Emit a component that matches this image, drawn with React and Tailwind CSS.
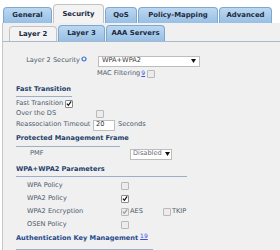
import React from 'react';

const topTabs = [
  { label: 'General', w: 'w-[49px]' },
  { label: 'Security', w: 'w-[51px]', active: true },
  { label: 'QoS', w: 'w-[32px]' },
  { label: 'Policy-Mapping', w: 'w-[80px]' },
  { label: 'Advanced', w: 'w-[53px]' },
];

const subTabs = [
  { label: 'Layer 2', w: 'w-[48px]', active: true },
  { label: 'Layer 3', w: 'w-[47px]' },
  { label: 'AAA Servers', w: 'w-[59px]' },
];

function Tab({ label, w, active, tall }) {
  if (active) {
    return (
      <div
        className={`${w} ${tall} flex items-center justify-center rounded-t-[4px] border border-b-0 border-[#c2c2c2] bg-[#f3f3f3] font-bold text-[#1c2a40]`}
      >
        {label}
      </div>
    );
  }
  return (
    <div
      className={`${w} h-[16px] flex items-center justify-center rounded-t-[4px] border border-b-0 border-[#7fa8d0] bg-gradient-to-b from-[#bcd8f1] to-[#97bfe5] font-bold text-[#1c2a40]`}
    >
      {label}
    </div>
  );
}

function Checkbox({ checked, disabled }) {
  return (
    <span
      className={`inline-flex shrink-0 w-[8px] h-[8px] items-center justify-center rounded-[1px] border ${
        checked && !disabled ? 'border-[#8a8a8a] bg-white' : 'border-[#b9b9b9] bg-[#ececec]'
      }`}
    >
      {checked && (
        <svg width="7" height="7" viewBox="0 0 7 7">
          <path
            d="M1 3.6 L2.8 5.6 L6 1"
            fill="none"
            stroke={disabled ? '#9a9a9a' : '#111'}
            strokeWidth="1.4"
          />
        </svg>
      )}
    </span>
  );
}

function Header({ children, line, mt, gap }) {
  return (
    <div className={mt}>
      <div className="h-[10px] leading-[10px] pl-[13px] font-bold text-[#23406b]">{children}</div>
      <div className={`${gap} ml-[13px] ${line} h-px bg-[#9bb0c6]`} />
    </div>
  );
}

function Caret() {
  return (
    <svg width="5" height="4" viewBox="0 0 5 4" className="shrink-0">
      <path d="M0 0 H5 L2.5 4 Z" fill="#111" />
    </svg>
  );
}

export default function App() {
  return (
    <div className="w-[280px] h-[250px] overflow-hidden whitespace-nowrap bg-white font-['DejaVu_Sans',sans-serif] text-[6.6px] text-[#4a5a6c]">
      {/* top tabs */}
      <div className="flex items-end gap-px h-[23px] pl-[3px] text-[6.9px]">
        {topTabs.map((t) => (
          <Tab key={t.label} {...t} tall="h-[19px]" />
        ))}
      </div>

      <div className="ml-[2px] h-[227px] border-l border-[#c6c6c6] bg-[#f0f0f0]">
        {/* sub tabs */}
        <div className="flex items-end gap-px h-[19px] pl-[6px] border-b border-[#a7b9cb] text-[6.9px]">
          {subTabs.map((t) => (
            <Tab key={t.label} {...t} tall="h-[15px]" />
          ))}
        </div>

        {/* Layer 2 security */}
        <div className="mt-[13px] h-[12px] flex items-center">
          <span className="w-[77px] text-right">Layer 2 Security</span>
          <svg width="6" height="6" viewBox="0 0 6 6" className="ml-[1px] -mt-[5px]">
            <circle cx="3" cy="3" r="2" fill="none" stroke="#3b6fd8" strokeWidth="1.2" />
          </svg>
          <div className="ml-[11px] w-[102px] h-[11px] flex items-center justify-between px-[3px] bg-white border border-[#bdbdbd] text-[#3a3a3a]">
            <span>WPA+WPA2</span>
            <Caret />
          </div>
        </div>

        {/* MAC filtering */}
        <div className="h-[14px] flex items-center pl-[94px]">
          <span>MAC Filtering</span>
          <span className="ml-[1px] -mt-[4px] text-[6px] text-[#3b4fe0] underline">9</span>
          <span className="ml-[2px] flex">
            <Checkbox />
          </span>
        </div>

        <Header mt="mt-[3px]" line="w-[56px]" gap="mt-[2px]">Fast Transition</Header>

        <div className="mt-[1px] h-[11px] flex items-center pl-[13px]">
          <span>Fast Transition</span>
          <span className="ml-[2px] flex">
            <Checkbox checked />
          </span>
        </div>
        <div className="h-[10px] flex items-center pl-[13px]">
          <span className="w-[80px]">Over the DS</span>
          <Checkbox />
        </div>
        <div className="h-[12px] flex items-center pl-[13px]">
          <span className="w-[77px]">Reassociation Timeout</span>
          <span className="w-[22px] h-[11px] flex items-center pl-[2px] bg-white border border-[#bdbdbd] text-[#333]">20</span>
          <span className="ml-[3px]">Seconds</span>
        </div>

        <Header mt="mt-[2px]" line="w-[104px]" gap="mt-[3px]">Protected Management Frame</Header>

        <div className="h-[14px] flex items-center pl-[27px]">
          <span className="w-[100px]">PMF</span>
          <div className="w-[42px] h-[11px] flex items-center gap-[3px] pl-[2px] bg-white border border-[#bdbdbd] text-[#6e6a80]">
            <span>Disabled</span>
            <Caret />
          </div>
        </div>

        <Header mt="mt-[3px]" line="w-[171px]" gap="mt-[2px]">WPA+WPA2 Parameters</Header>

        <div className="mt-[2px] pl-[24px]">
          {[
            ['WPA Policy', false],
            ['WPA2 Policy', true],
          ].map(([l, c]) => (
            <div key={l} className="h-[13px] flex items-center">
              <span className="w-[94px]">{l}</span>
              <Checkbox checked={c} />
            </div>
          ))}
          <div className="h-[13px] flex items-center">
            <span className="w-[94px]">WPA2 Encryption</span>
            <Checkbox checked disabled />
            <span className="ml-[1px] w-[33px]">AES</span>
            <Checkbox />
            <span className="ml-[1px]">TKIP</span>
          </div>
          <div className="h-[13px] flex items-center">
            <span className="w-[94px]">OSEN Policy</span>
            <Checkbox />
          </div>
        </div>

        <div className="mt-[2px]">
          <div className="h-[10px] leading-[10px] pl-[13px] flex items-center">
            <span className="font-bold text-[#1f4a8c]">Authentication Key Management</span>
            <span className="ml-[2px] -mt-[4px] text-[6px] text-[#3b4fe0] underline">19</span>
          </div>
          <div className="mt-[6px] ml-[13px] w-[137px] h-px bg-[#9bb0c6]" />
        </div>
      </div>
    </div>
  );
}
